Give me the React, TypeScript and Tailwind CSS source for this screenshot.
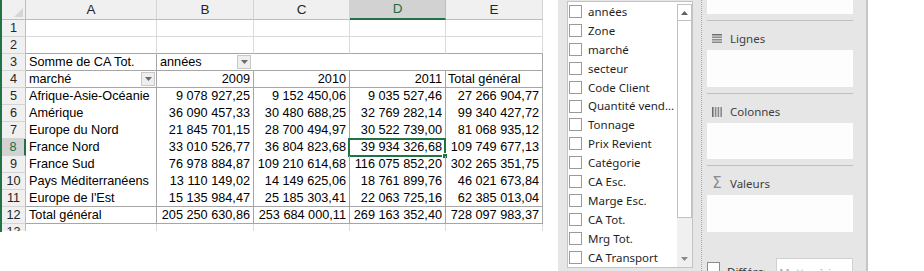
import React from "react";

const COLS = ["w-[131px]", "w-[97px]", "w-[96px]", "w-[96px]", "w-[97px]"];
const LETTERS = ["A", "B", "C", "D", "E"];

const rows = [
  ["Afrique-Asie-Océanie", "9 078 927,25", "9 152 450,06", "9 035 527,46", "27 266 904,77"],
  ["Amérique", "36 090 457,33", "30 480 688,25", "32 769 282,14", "99 340 427,72"],
  ["Europe du Nord", "21 845 701,15", "28 700 494,97", "30 522 739,00", "81 068 935,12"],
  ["France Nord", "33 010 526,77", "36 804 823,68", "39 934 326,68", "109 749 677,13"],
  ["France Sud", "76 978 884,87", "109 210 614,68", "116 075 852,20", "302 265 351,75"],
  ["Pays Méditerranéens", "13 110 149,02", "14 149 625,06", "18 761 899,76", "46 021 673,84"],
  ["Europe de l'Est", "15 135 984,47", "25 185 303,41", "22 063 725,16", "62 385 013,04"],
];
const total = ["Total général", "205 250 630,86", "253 684 000,11", "269 163 352,40", "728 097 983,37"];

const fields = [
  "années", "Zone", "marché", "secteur", "Code Client", "Quantité vend...", "Tonnage",
  "Prix Revient", "Catégorie", "CA Esc.", "Marge Esc.", "CA Tot.", "Mrg Tot.", "CA Transport",
];

function RowHead({ n, sel }: { n: number; sel?: boolean }) {
  if (sel) {
    return (
      <div className="w-[24px] shrink-0 flex items-center justify-center bg-[#d2d2d2] border-r-2 border-r-[#217346] border-b border-b-[#d4d4d4] text-[#1e6b40]">
        {n}
      </div>
    );
  }
  return (
    <div className="w-[24px] shrink-0 flex items-center justify-center bg-[#f0f0f0] border-r border-r-[#bdbdbd] border-b border-b-[#d4d4d4] text-[#262626]">
      {n}
    </div>
  );
}

function DropBtn() {
  return (
    <div className="w-[14px] h-[14px] shrink-0 flex items-center justify-center bg-[#eeeeee] border border-[#c8c8c8]">
      <svg width="7" height="4" viewBox="0 0 7 4">
        <polygon points="0,0 7,0 3.5,4" fill="#6b6b6b" />
      </svg>
    </div>
  );
}

function EmptyRow({ n, darkBottom }: { n: number; darkBottom?: boolean }) {
  return (
    <div className="flex h-[17px]">
      <RowHead n={n} />
      {COLS.map((w, i) => (
        <div
          key={i}
          className={`${w} shrink-0 border-r border-r-[#dadada] border-b ${darkBottom ? "border-b-[#a6a6a6]" : "border-b-[#dadada]"}`}
        />
      ))}
    </div>
  );
}

function Sheet() {
  return (
    <div className="w-[558px] shrink-0 flex items-start font-['Liberation_Sans',Arial,sans-serif] text-[12.7px] text-black leading-none">
      <div className="w-[2px] h-[232px] bg-[#217346] shrink-0" />
      <div className="flex flex-col">
        {/* column headers */}
        <div className="flex h-[20px]">
          <div className="w-[24px] shrink-0 flex items-end justify-end pr-[2px] pb-[2px] bg-[#f0f0f0] border-r border-b border-[#bdbdbd]">
            <svg width="9" height="9" viewBox="0 0 9 9">
              <polygon points="9,0 9,9 0,9" fill="#d6d6d6" />
            </svg>
          </div>
          {COLS.map((w, i) =>
            i === 3 ? (
              <div key={i} className={`${w} shrink-0 flex items-center justify-center bg-[#d2d2d2] border-r border-r-[#bdbdbd] border-b-2 border-b-[#217346] text-[#1e6b40] text-[13.5px]`}>
                {LETTERS[i]}
              </div>
            ) : (
              <div key={i} className={`${w} shrink-0 flex items-center justify-center bg-[#f0f0f0] border-r border-r-[#d4d4d4] border-b border-b-[#bdbdbd] text-[#262626] text-[13.5px]`}>
                {LETTERS[i]}
              </div>
            )
          )}
        </div>

        <EmptyRow n={1} />
        <EmptyRow n={2} darkBottom />

        {/* row 3 */}
        <div className="flex h-[17px]">
          <RowHead n={3} />
          <div className="w-[131px] shrink-0 flex items-center px-[3px] border-r border-b border-[#a6a6a6]">Somme de CA Tot.</div>
          <div className="w-[97px] shrink-0 flex items-center justify-between pl-[3px] pr-[3px] border-b border-[#a6a6a6]">
            <span>années</span>
            <DropBtn />
          </div>
          <div className="w-[96px] shrink-0 border-b border-[#a6a6a6]" />
          <div className="w-[96px] shrink-0 border-b border-[#a6a6a6]" />
          <div className="w-[97px] shrink-0 border-r border-b border-[#a6a6a6]" />
        </div>

        {/* row 4 */}
        <div className="flex h-[17px]">
          <RowHead n={4} />
          <div className="w-[131px] shrink-0 flex items-center justify-between pl-[3px] pr-[1px] border-r border-b border-[#a6a6a6]">
            <span>marché</span>
            <DropBtn />
          </div>
          <div className="w-[97px] shrink-0 flex items-center justify-end px-[3px] border-r border-b border-[#a6a6a6]">2009</div>
          <div className="w-[96px] shrink-0 flex items-center justify-end px-[3px] border-r border-b border-[#a6a6a6]">2010</div>
          <div className="w-[96px] shrink-0 flex items-center justify-end px-[3px] border-r border-b border-[#a6a6a6]">2011</div>
          <div className="w-[97px] shrink-0 flex items-center px-[2px] border-r border-b border-[#a6a6a6]">Total général</div>
        </div>

        {rows.map((r, ri) => (
          <div key={ri} className="flex h-[17px]">
            <RowHead n={ri + 5} sel={ri === 3} />
            {r.map((v, ci) => (
              <div
                key={ci}
                className={`${COLS[ci]} shrink-0 relative flex items-center px-[3px] border-r border-r-[#a6a6a6] ${ci === 0 ? "" : "justify-end"} ${ri === 6 ? "border-b border-b-[#a6a6a6]" : ""}`}
              >
                {v}
                {ri === 3 && ci === 3 && (
                  <>
                    <div className="absolute -left-[2px] -top-[1px] -right-[1px] -bottom-[1px] border-2 border-[#217346]" />
                    <div className="absolute -right-[3px] -bottom-[3px] w-[6px] h-[6px] bg-[#217346] border border-white" />
                  </>
                )}
              </div>
            ))}
          </div>
        ))}

        {/* row 12 */}
        <div className="flex h-[17px]">
          <RowHead n={12} />
          {total.map((v, ci) => (
            <div
              key={ci}
              className={`${COLS[ci]} shrink-0 flex items-center px-[3px] border-r border-b border-[#a6a6a6] ${ci === 0 ? "" : "justify-end"}`}
            >
              {v}
            </div>
          ))}
        </div>

        {/* row 13, cut */}
        <div className="h-[7px] overflow-hidden">
          <EmptyRow n={13} />
        </div>
      </div>
    </div>
  );
}

function FieldList() {
  return (
    <div className="w-[143px] shrink-0 h-full bg-[#e6e6e6] pl-[9px] pt-[1px] font-['Noto_Sans',sans-serif] text-[11.5px] text-[#1f1f1f]">
      <div className="w-[126px] h-[267px] flex bg-white border border-[#c3c3c3]">
        <div className="flex-1 flex flex-col">
          {fields.map((f) => (
            <div key={f} className="h-[19px] flex items-center whitespace-nowrap">
              <div className="ml-[1px] w-[13px] h-[13px] shrink-0 border border-[#9a9a9a] bg-white" />
              <span className="ml-[6px]">{f}</span>
            </div>
          ))}
        </div>
        <div className="w-[15px] shrink-0 flex flex-col pt-[2px]">
          <div className="h-[17px] flex items-center justify-center border border-[#c2c2c2] bg-white">
            <svg width="7" height="4" viewBox="0 0 7 4">
              <polygon points="3.5,0 7,4 0,4" fill="#606060" />
            </svg>
          </div>
          <div className="h-[197px] border border-t-0 border-[#c2c2c2] bg-white" />
          <div className="flex-1 bg-[#f0f0f0] flex items-end justify-center pb-[6px]">
            <svg width="7" height="4" viewBox="0 0 7 4">
              <polygon points="0,0 7,0 3.5,4" fill="#8a8a8a" />
            </svg>
          </div>
        </div>
      </div>
    </div>
  );
}

function LinesIcon() {
  return (
    <svg width="10" height="9" viewBox="0 0 10 9">
      <rect x="0" y="0" width="10" height="1.5" fill="#6e6e6e" />
      <rect x="0" y="2.5" width="10" height="1.5" fill="#8a8a8a" />
      <rect x="0" y="5" width="10" height="1.5" fill="#8a8a8a" />
      <rect x="0" y="7.5" width="10" height="1.5" fill="#8a8a8a" />
    </svg>
  );
}

function ColsIcon() {
  return (
    <svg width="10" height="10" viewBox="0 0 10 10">
      <rect x="0" y="0" width="1.6" height="10" fill="#6e6e6e" />
      <rect x="2.8" y="0" width="1.6" height="10" fill="#8a8a8a" />
      <rect x="5.6" y="0" width="1.6" height="10" fill="#8a8a8a" />
      <rect x="8.4" y="0" width="1.6" height="10" fill="#8a8a8a" />
    </svg>
  );
}

function AreaHeader({ icon, label }: { icon: React.ReactNode; label: string }) {
  return (
    <div className="h-[29px] flex items-center pt-[6px]">
      <div className="ml-[5px] w-[10px] flex items-center justify-center">{icon}</div>
      <span className="ml-[8px]">{label}</span>
    </div>
  );
}

function AreasPane() {
  return (
    <div className="w-[165px] shrink-0 h-full bg-[#e6e6e6] border-l border-dotted border-[#a9a9a9] pl-[5px] pr-[13px] font-['Noto_Sans',sans-serif] text-[11.5px] text-[#404040]">
      <div className="flex flex-col">
        <div className="h-[14px] bg-[#fdfdfd]" />
        <div className="mt-[6px] h-px bg-[#c0c0c0]" />
        <AreaHeader icon={<LinesIcon />} label="Lignes" />
        <div className="h-[37px] bg-[#fdfdfd]" />
        <div className="mt-[6px] h-px bg-[#c0c0c0]" />
        <AreaHeader icon={<ColsIcon />} label="Colonnes" />
        <div className="h-[36px] bg-[#fdfdfd]" />
        <div className="mt-[6px] h-px bg-[#c0c0c0]" />
        <AreaHeader icon={<span className="text-[15px] leading-none text-[#8a8a8a] font-['DejaVu_Sans',sans-serif]">Σ</span>} label="Valeurs" />
        <div className="h-[37px] bg-[#fdfdfd]" />
        <div className="mt-[26px] flex items-start">
          <div className="mt-[4px] w-[13px] h-[13px] shrink-0 border border-[#8a8a8a] bg-white" />
          <span className="ml-[7px] mt-[5px] w-[38px] overflow-hidden whitespace-nowrap text-[#333]">Différer</span>
          <div className="ml-auto w-[77px] h-[28px] shrink-0 flex items-start justify-center pt-[5px] bg-white border border-[#d0d0d0] text-[#a6a6a6]">
            Mettre à jour
          </div>
        </div>
      </div>
    </div>
  );
}

export default function App() {
  return (
    <div className="flex w-[924px] h-[271px] bg-white overflow-hidden">
      <Sheet />
      <FieldList />
      <AreasPane />
      <div className="w-[2px] shrink-0 h-full bg-[#c6c6c6]" />
      <div className="flex-1 bg-white" />
    </div>
  );
}
